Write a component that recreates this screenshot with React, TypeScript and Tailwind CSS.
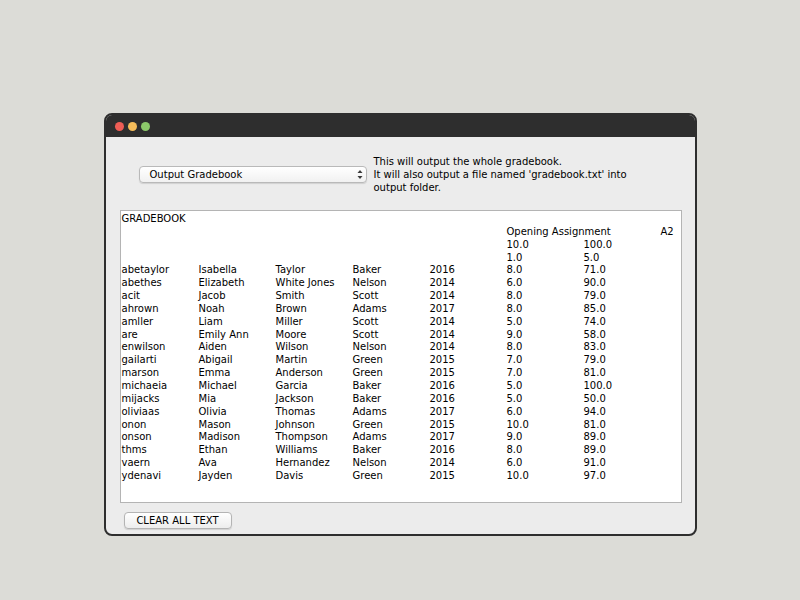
import React from "react";

const ROWS: string[][] = [
  ["abetaylor", "Isabella", "Taylor", "Baker", "2016", "8.0", "71.0"],
  ["abethes", "Elizabeth", "White Jones", "Nelson", "2014", "6.0", "90.0"],
  ["acit", "Jacob", "Smith", "Scott", "2014", "8.0", "79.0"],
  ["ahrown", "Noah", "Brown", "Adams", "2017", "8.0", "85.0"],
  ["amller", "Liam", "Miller", "Scott", "2014", "5.0", "74.0"],
  ["are", "Emily Ann", "Moore", "Scott", "2014", "9.0", "58.0"],
  ["enwilson", "Aiden", "Wilson", "Nelson", "2014", "8.0", "83.0"],
  ["gailarti", "Abigail", "Martin", "Green", "2015", "7.0", "79.0"],
  ["marson", "Emma", "Anderson", "Green", "2015", "7.0", "81.0"],
  ["michaeia", "Michael", "Garcia", "Baker", "2016", "5.0", "100.0"],
  ["mijacks", "Mia", "Jackson", "Baker", "2016", "5.0", "50.0"],
  ["oliviaas", "Olivia", "Thomas", "Adams", "2017", "6.0", "94.0"],
  ["onon", "Mason", "Johnson", "Green", "2015", "10.0", "81.0"],
  ["onson", "Madison", "Thompson", "Adams", "2017", "9.0", "89.0"],
  ["thms", "Ethan", "Williams", "Baker", "2016", "8.0", "89.0"],
  ["vaern", "Ava", "Hernandez", "Nelson", "2014", "6.0", "91.0"],
  ["ydenavi", "Jayden", "Davis", "Green", "2015", "10.0", "97.0"],
];

// header lines: empty cells are tab stops
const HEAD: string[][] = [
  ["", "", "", "", "", "Opening Assignment", "", "A2"],
  ["", "", "", "", "", "10.0", "100.0"],
  ["", "", "", "", "", "1.0", "5.0"],
];

function Line({ cells }: { cells: string[] }) {
  return (
    <div className="grid grid-cols-[repeat(8,77px)] h-[12.85px] leading-[12.85px] whitespace-nowrap">
      {cells.map((c, i) => (
        <span key={i}>{c}</span>
      ))}
    </div>
  );
}

export default function App() {
  return (
    <div
      className="min-h-[600px] bg-[#dcdcd7] flex justify-center pt-[113px]"
      style={{ fontFamily: '"DejaVu Sans", "Open Sans", sans-serif' }}
    >
      <div className="w-[593px] h-[423px] border-2 border-[#2e2e2e] rounded-[8px] overflow-hidden flex flex-col bg-[#ececec]">
        {/* title bar */}
        <div className="h-[22px] bg-[#2e2e2e] flex items-center gap-[4px] pl-[9px] shrink-0">
          <span className="w-[9px] h-[9px] rounded-full bg-[#ee5d55]" />
          <span className="w-[9px] h-[9px] rounded-full bg-[#f6bd5a]" />
          <span className="w-[9px] h-[9px] rounded-full bg-[#8cc86a]" />
        </div>

        {/* body */}
        <div className="flex-1 flex flex-col pr-[13px] pl-[14px] pb-[10px]">
          <div className="flex items-center pt-[18px] pl-[19px]">
            <div className="relative w-[228px] h-[17px] rounded-[4px] border border-[#b9b9b9] bg-gradient-to-b from-white to-[#f1f1f1] shadow-[0_1px_1px_rgba(0,0,0,0.12)] flex items-center pl-[10px] text-[10px] text-black">
              Output Gradebook
              <span className="absolute right-[3px] top-[2px] flex flex-col items-center">
                <svg width="6" height="11" viewBox="0 0 6 11">
                  <path d="M0.5 4 L3 1 L5.5 4 Z" fill="#3a3a3a" />
                  <path d="M0.5 7 L3 10 L5.5 7 Z" fill="#3a3a3a" />
                </svg>
              </span>
            </div>
            <div className="ml-[7px] text-[10px] leading-[13px] text-black">
              This will output the whole gradebook.
              <br />
              It will also output a file named 'gradebook.txt' into
              <br />
              output folder.
            </div>
          </div>

          <div className="mt-[16px] h-[293px] bg-white border border-[#b4b4b4] pt-[2px] pl-[1px] text-[10px] text-black overflow-hidden">
            <div className="h-[12.85px] leading-[12.85px]">GRADEBOOK</div>
            {HEAD.map((h, i) => (
              <Line key={"h" + i} cells={h} />
            ))}
            {ROWS.map((r, i) => (
              <Line key={i} cells={r} />
            ))}
          </div>

          <div className="mt-[4px] pl-[4px]">
            <button className="w-[108px] h-[17px] rounded-[4px] border border-[#b4b4b4] bg-gradient-to-b from-white to-[#ededed] shadow-[0_1px_1px_rgba(0,0,0,0.12)] text-[10px] leading-[15px] text-black">
              CLEAR ALL TEXT
            </button>
          </div>
        </div>
      </div>
    </div>
  );
}
